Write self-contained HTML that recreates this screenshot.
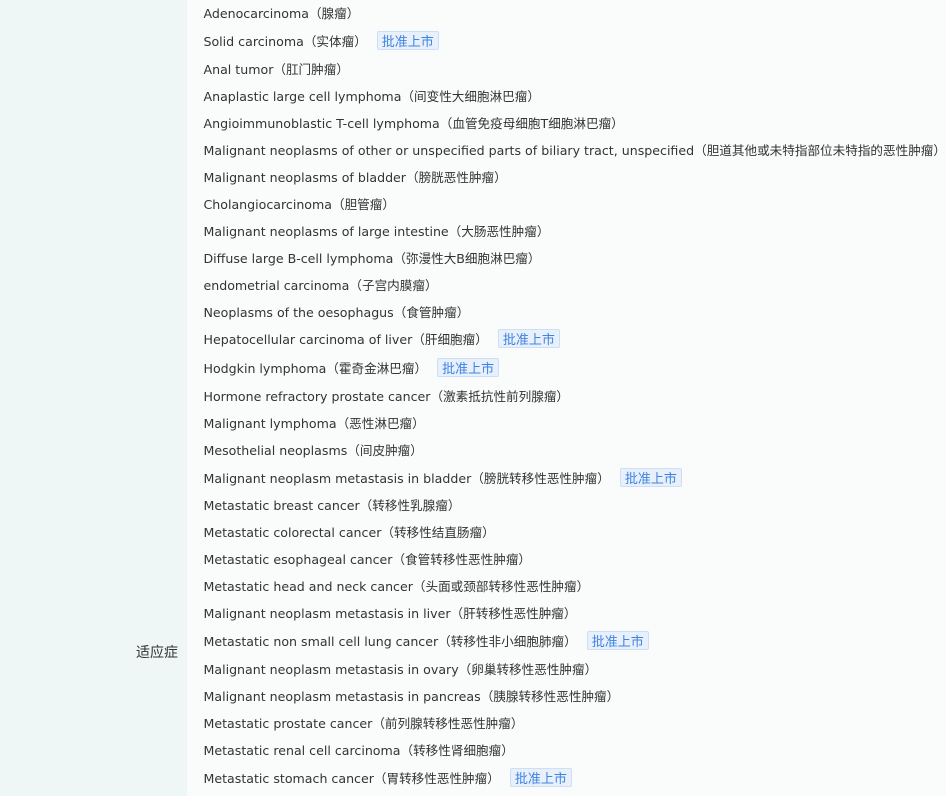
<!DOCTYPE html>
<html><head><meta charset="utf-8"><style>
html,body{margin:0;padding:0;width:946px;height:796px;overflow:hidden;background:#fff;}
body{font-family:"DejaVu Sans","Noto Sans CJK SC",sans-serif;font-size:12.6px;color:#333;}
.wrap{display:flex;height:796px;}
.lab{width:188px;background:#eff6f6;position:relative;}
.lab span{position:absolute;left:136px;top:642px;font-size:14px;font-family:"Noto Sans CJK SC",sans-serif;}
.list{flex:1;background:#fafbfb;padding-left:16px;margin-top:-1px;}
.r{height:27px;display:flex;align-items:center;white-space:nowrap;}
.r.t{height:28.6px;}
.tag{display:inline-block;margin-left:10px;height:17px;line-height:17px;padding:0 4px;background:#e8f0fc;border:1px solid #cddff6;color:#3f83e0;font-size:13px;border-radius:2px;font-family:"Noto Sans CJK SC",sans-serif;}
</style></head><body><div class="wrap"><div class="lab"><span>适应症</span></div><div class="list">
<div class="r">Adenocarcinoma（腺瘤）</div>
<div class="r t">Solid carcinoma（实体瘤）<span class="tag">批准上市</span></div>
<div class="r">Anal tumor（肛门肿瘤）</div>
<div class="r">Anaplastic large cell lymphoma（间变性大细胞淋巴瘤）</div>
<div class="r">Angioimmunoblastic T-cell lymphoma（血管免疫母细胞T细胞淋巴瘤）</div>
<div class="r">Malignant neoplasms of other or unspecified parts of biliary tract, unspecified（胆道其他或未特指部位未特指的恶性肿瘤）</div>
<div class="r">Malignant neoplasms of bladder（膀胱恶性肿瘤）</div>
<div class="r">Cholangiocarcinoma（胆管瘤）</div>
<div class="r">Malignant neoplasms of large intestine（大肠恶性肿瘤）</div>
<div class="r">Diffuse large B-cell lymphoma（弥漫性大B细胞淋巴瘤）</div>
<div class="r">endometrial carcinoma（子宫内膜瘤）</div>
<div class="r">Neoplasms of the oesophagus（食管肿瘤）</div>
<div class="r t">Hepatocellular carcinoma of liver（肝细胞瘤）<span class="tag">批准上市</span></div>
<div class="r t">Hodgkin lymphoma（霍奇金淋巴瘤）<span class="tag">批准上市</span></div>
<div class="r">Hormone refractory prostate cancer（激素抵抗性前列腺瘤）</div>
<div class="r">Malignant lymphoma（恶性淋巴瘤）</div>
<div class="r">Mesothelial neoplasms（间皮肿瘤）</div>
<div class="r t">Malignant neoplasm metastasis in bladder（膀胱转移性恶性肿瘤）<span class="tag">批准上市</span></div>
<div class="r">Metastatic breast cancer（转移性乳腺瘤）</div>
<div class="r">Metastatic colorectal cancer（转移性结直肠瘤）</div>
<div class="r">Metastatic esophageal cancer（食管转移性恶性肿瘤）</div>
<div class="r">Metastatic head and neck cancer（头面或颈部转移性恶性肿瘤）</div>
<div class="r">Malignant neoplasm metastasis in liver（肝转移性恶性肿瘤）</div>
<div class="r t">Metastatic non small cell lung cancer（转移性非小细胞肺瘤）<span class="tag">批准上市</span></div>
<div class="r">Malignant neoplasm metastasis in ovary（卵巢转移性恶性肿瘤）</div>
<div class="r">Malignant neoplasm metastasis in pancreas（胰腺转移性恶性肿瘤）</div>
<div class="r">Metastatic prostate cancer（前列腺转移性恶性肿瘤）</div>
<div class="r">Metastatic renal cell carcinoma（转移性肾细胞瘤）</div>
<div class="r t">Metastatic stomach cancer（胃转移性恶性肿瘤）<span class="tag">批准上市</span></div>
</div></div></body></html>
